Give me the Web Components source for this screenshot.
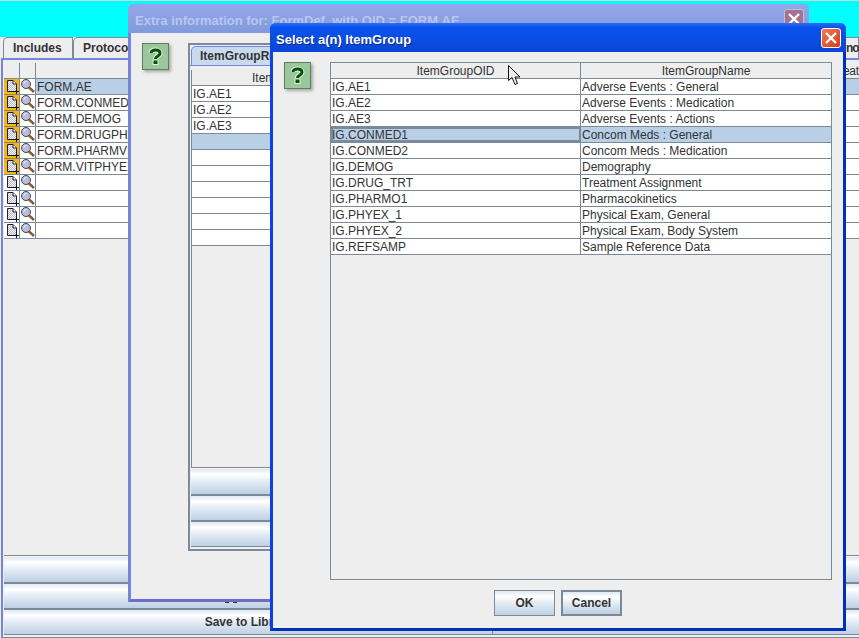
<!DOCTYPE html>
<html>
<head>
<meta charset="utf-8">
<style>
html, body { margin: 0; height: 100%; overflow: hidden; background: #00ffff; }
body { font: 12px "Liberation Sans", Arial, sans-serif; color: #333; }
desk-top { width: 859px; height: 638px; }
</style>
</head>
<body>
<desk-top>
  <main-frame></main-frame>
  <dialog-window id="extra" title="Extra information for: FormDef  with OID = FORM.AE" faded style="left:128px;top:4px;width:681px;height:598px">
    <extra-body></extra-body>
  </dialog-window>
  <dialog-window id="select" title="Select a(n) ItemGroup" style="left:270px;top:23px;width:576px;height:608px">
    <select-body></select-body>
  </dialog-window>
  <mouse-arrow></mouse-arrow>
</desk-top>

<script>
const GRAD = 'linear-gradient(#dfe8f2 0%, #ffffff 22%, #e4ecf5 50%, #bdd0e4 100%)';
const BOLD = 'bold 12px "Liberation Sans", Arial, sans-serif';

class DeskTop extends HTMLElement {
  constructor() {
    super();
    this.attachShadow({ mode: 'open' });
    this.shadowRoot.innerHTML = `
    <style>
      :host { display: block; position: relative; overflow: hidden; background: #00ffff; box-shadow: inset 0 1px 0 #c8d8d8; }
    </style>
    <slot></slot>`;
  }
}

class HelpIcon extends HTMLElement {
  constructor() {
    super();
    this.attachShadow({ mode: 'open' });
    this.shadowRoot.innerHTML = `
    <style>
      :host { display: block; width: 27px; height: 27px; box-sizing: border-box; background: #9cc79c; border: 1px solid #5c805c; box-shadow: 2px 2px 3px #a8a8a8; }
      svg { display: block; }
    </style>
    <svg width="25" height="25" viewBox="0 0 25 25">
      <path d="M8 9 C8 5 17 5 17 9.5 C17 12 12.5 12 12.5 15" fill="none" stroke="#d8f5d8" stroke-width="5"/>
      <rect x="9.5" y="15.5" width="6" height="5.5" fill="#d8f5d8"/>
      <path d="M8 9 C8 5 17 5 17 9.5 C17 12 12.5 12 12.5 15" fill="none" stroke="#0b4f0b" stroke-width="3"/>
      <rect x="10.5" y="16.5" width="4" height="3.5" fill="#0b4f0b"/>
    </svg>`;
  }
}

class DialogWindow extends HTMLElement {
  constructor() {
    super();
    this.attachShadow({ mode: 'open' });
    this.shadowRoot.innerHTML = `
    <style>
      :host { display: flex; flex-direction: column; position: absolute; box-sizing: border-box; border: 3px solid #0a40e8; border-top: 0; border-right-color: #0030b8; border-bottom-color: #0030b8; border-radius: 6px 6px 0 0; background: #eeeeee; }
      :host([faded]) { border-color: #7585dc; border-right-color: #6a78c8; border-bottom-color: #6a6ec8; }
      .bar { flex: none; height: 29px; margin: 0 -3px; display: flex; align-items: center; justify-content: space-between; padding: 0 5px 0 6px; border-radius: 6px 6px 0 0; background: linear-gradient(#2f6cf5 0%, #0a52ee 15%, #0a4de0 60%, #0a45d8 100%); font: bold 13px "Liberation Sans", Arial, sans-serif; color: #fff; text-shadow: 1px 1px 0 #06288c; white-space: pre; }
      :host([faded]) .bar { background: linear-gradient(#92a8e8 0%, #8299dc 100%); color: #b9c6ef; text-shadow: none; padding-left: 7px; }
      #t { padding-top: 3px; }
      .close { width: 20px; height: 20px; box-sizing: border-box; border: 1px solid #fff; border-radius: 3px; background: linear-gradient(135deg, #ef7a55, #d83c12); }
      :host([faded]) .close { background: #a6708e; border-color: #b9c0e8; }
      svg { display: block; }
      .body { flex: 1; min-height: 0; display: flex; flex-direction: column; }
    </style>
    <div class="bar"><span id="t"></span><div class="close"><svg width="18" height="18" viewBox="0 0 18 18"><path d="M4 4 L14 14 M14 4 L4 14" stroke="#fff" stroke-width="2.4"/></svg></div></div>
    <div class="body"><slot></slot></div>`;
    this.shadowRoot.getElementById('t').textContent = this.getAttribute('title');
    this.removeAttribute('title');
  }
}

class SwingTable extends HTMLElement {
  set config(c) {
    const cols = c.widths.join(' ');
    let html = '<div class="row head" style="grid-template-columns:' + cols + '">';
    c.head.forEach(h => { html += '<div class="cell">' + h + '</div>'; });
    html += '</div>';
    c.rows.forEach((r, i) => {
      let cl = 'row';
      if (i === c.selected) cl += c.focus ? ' sel focus' : ' sel';
      html += '<div class="' + cl + '" style="grid-template-columns:' + cols + '">';
      r.forEach(v => { html += '<div class="cell">' + v + '</div>'; });
      html += '</div>';
    });
    this.shadowRoot.getElementById('g').innerHTML = html;
  }
  constructor() {
    super();
    this.attachShadow({ mode: 'open' });
    this.shadowRoot.innerHTML = `
    <style>
      :host { display: block; font: 12px "Liberation Sans", Arial, sans-serif; color: #333; overflow: hidden; }
      .row { display: grid; height: 16px; box-sizing: border-box; background: #fff; border-bottom: 1px solid #7a8a99; }
      .head { background: #eeeeee; }
      .head .cell { text-align: center; padding-left: 0; }
      .cell { box-sizing: border-box; padding: 1px 0 0 1px; border-right: 1px solid #7a8a99; line-height: 14px; white-space: nowrap; overflow: hidden; }
      .cell:last-child { border-right: 0; }
      .sel { background: #b8cfe5; }
      .focus .cell:first-child { outline: 2px solid #7a8a99; outline-offset: -2px; }
    </style>
    <div id="g"></div>`;
  }
}

class NoteIcon extends HTMLElement {
  constructor() {
    super();
    this.attachShadow({ mode: 'open' });
    this.shadowRoot.innerHTML = `
    <style>
      :host { display: block; width: 15px; height: 15px; }
      :host([on]) { background: #f5b80a; }
      svg { display: block; }
    </style>
    <svg width="15" height="15" viewBox="0 0 15 15">
      <defs><pattern id="d" width="2" height="2" patternUnits="userSpaceOnUse"><rect width="2" height="2" fill="#fff"/><rect width="1" height="1" fill="#b4b4d8"/><rect x="1" y="1" width="1" height="1" fill="#b4b4d8"/></pattern></defs>
      <path d="M3.5 1.5 H9 L12.5 5 V12.5 H3.5 Z" fill="url(#d)" stroke="#222"/>
      <path d="M9 1.5 V5 H12.5" fill="#fff" stroke="#222"/>
      <path d="M12.5 10 V15 M10 12.5 H15" stroke="#111" stroke-width="1"/>
    </svg>`;
  }
}

class LensIcon extends HTMLElement {
  constructor() {
    super();
    this.attachShadow({ mode: 'open' });
    this.shadowRoot.innerHTML = `
    <style>
      :host { display: block; width: 15px; height: 15px; }
      svg { display: block; }
    </style>
    <svg width="15" height="15" viewBox="0 0 15 15">
      <path d="M8.5 8 L14 13" stroke="#8a5a2a" stroke-width="2.4"/>
      <circle cx="6" cy="5" r="4.5" fill="#b8bcd8" stroke="#444" stroke-width="1"/>
      <path d="M3.5 4.5 Q4.5 2.5 6.5 2.5" stroke="#fff" fill="none"/>
    </svg>`;
  }
}

class BigButton extends HTMLElement {
  constructor() {
    super();
    this.attachShadow({ mode: 'open' });
    this.shadowRoot.innerHTML = `
    <style>
      :host { display: flex; align-items: center; justify-content: center; box-sizing: border-box; height: 26px; background: ${GRAD}; border-bottom: 2px solid #7a8a99; font: ${BOLD}; color: #333; }
      :host(:first-child) { height: 27px; }
      :host(:last-child) { height: 24px; border-bottom: 0; }
    </style>
    <slot></slot>`;
  }
}

class MainFrame extends HTMLElement {
  constructor() {
    super();
    this.attachShadow({ mode: 'open' });
    const rows = ['FORM.AE', 'FORM.CONMED', 'FORM.DEMOG', 'FORM.DRUGPHARM', 'FORM.PHARMVIT', 'FORM.VITPHYEX', '', '', '', ''];
    let list = '<div class="line head"><i></i><i></i><i></i><i>eat</i></div>';
    rows.forEach((r, i) => {
      list += '<div class="line' + (i === 0 ? ' sel' : '') + '"><i><note-icon ' + (r ? 'on' : '') + '></note-icon></i><i><lens-icon></lens-icon></i><i>' + r + '</i><i></i></div>';
    });
    this.shadowRoot.innerHTML = `
    <style>
      :host { position: absolute; left: 0; top: 37px; right: 0; bottom: 0; box-sizing: border-box; display: flex; flex-direction: column; background: #eeeeee; overflow: hidden; }
      .tabs { flex: none; display: flex; height: 21px; padding-left: 3px; }
      .tab { box-sizing: border-box; height: 21px; width: 70px; flex: none; padding-left: 9px; font: ${BOLD}; line-height: 21px; border: 1px solid #7a8a99; border-bottom: 0; border-radius: 5px 0 0 0; color: #333; white-space: nowrap; }
      .main { flex: 1; min-height: 0; box-sizing: border-box; margin-left: 1px; border: solid #7585dc; border-width: 2px 0 0 2px; border-bottom: 1px solid #7a8a99; padding: 3px 0 2px 1px; display: flex; flex-direction: column; }
      .list { flex: 1; min-height: 0; }
      .line { display: grid; grid-template-columns: 16px 16px 807px 1fr; height: 16px; box-sizing: border-box; background: #fff; border-bottom: 1px solid #7a8a99; }
      .line.head { background: #eee; }
      .line.sel { background: #b8cfe5; }
      .line.sel i:nth-child(1), .line.sel i:nth-child(2) { background: #fff; }
      i { font-style: normal; display: block; padding: 1px 0 0 1px; line-height: 14px; border-right: 1px solid #7a8a99; box-sizing: border-box; white-space: nowrap; overflow: hidden; }
      i:nth-child(1), i:nth-child(2) { padding: 0; }
      i:nth-child(4) { border-right: 0; padding-left: 0; letter-spacing: -0.3px; }
      .btns { flex: none; display: grid; grid-template-columns: 488px 1fr; gap: 1px; background: #7a8a99; border-top: 1px solid #888; border-bottom: 1px solid #7a8a99; }
      .col { display: flex; flex-direction: column; background: #f6f6f6; padding-top: 1px; }
      .marks { display: block; }
    </style>
    <div class="tabs">
      <div class="tab">Includes</div>
      <div class="tab" style="width:200px">Protocol</div>
      <div class="tab" style="margin-left:547px;width:39px;padding-left:25px;letter-spacing:-1px;border-radius:0">no</div>
    </div>
    <div class="main">
      <div class="list">${list}</div>
      <div class="btns">
        <div class="col">
          <big-button></big-button>
          <big-button><svg class="marks" width="46" height="24" viewBox="0 0 46 24"><rect x="0" y="18" width="4" height="1" fill="#333"/><rect x="8" y="18" width="4" height="1" fill="#333"/></svg></big-button>
          <big-button>Save to Library</big-button>
        </div>
        <div class="col">
          <big-button></big-button>
          <big-button></big-button>
          <big-button></big-button>
        </div>
      </div>
    </div>`;
  }
}

class ExtraBody extends HTMLElement {
  constructor() {
    super();
    this.attachShadow({ mode: 'open' });
    this.shadowRoot.innerHTML = `
    <style>
      :host { flex: 1; min-height: 0; display: flex; padding: 10px 0 48px 11px; box-sizing: border-box; height: 100%; gap: 19px; }
      help-icon { flex: none; }
      .pane { width: 240px; box-sizing: border-box; display: flex; flex-direction: column; border: 2px solid #7a8a99; border-right: 0; padding: 0 0 2px 0; background: #eee; }
      .tab { flex: none; width: 180px; margin: 1px 0 0 1px; height: 19px; box-sizing: border-box; font: ${BOLD}; line-height: 19px; padding-left: 8px; background: #c8dbee; border: 1px solid #7585dc; border-bottom: 0; border-radius: 5px 0 0 0; white-space: nowrap; overflow: hidden; }
      .in { flex: 1; min-height: 0; display: flex; flex-direction: column; border-top: 1px solid #7585dc; padding: 4px 0 0 1px; }
      swing-table { flex: 1; min-height: 0; border-left: 1px solid #7a8a99; }
      .btns { flex: none; border-top: 1px solid #888; border-bottom: 1px solid #7a8a99; padding-top: 1px; background: #f6f6f6; }
    </style>
    <help-icon></help-icon>
    <div class="pane">
      <div class="tab">ItemGroupRef</div>
      <div class="in">
        <swing-table id="t"></swing-table>
        <div class="btns">
          <big-button></big-button>
          <big-button></big-button>
          <big-button></big-button>
        </div>
      </div>
    </div>`;
    const blank = [''];
    this.shadowRoot.getElementById('t').config = {
      widths: ['198px'], head: ['ItemGroupOID'], selected: 3,
      rows: [['IG.AE1'], ['IG.AE2'], ['IG.AE3'], blank, blank, blank, blank, blank, blank, blank]
    };
  }
}

class SelectBody extends HTMLElement {
  constructor() {
    super();
    this.attachShadow({ mode: 'open' });
    this.shadowRoot.innerHTML = `
    <style>
      :host { flex: 1; display: flex; flex-direction: column; box-sizing: border-box; height: 100%; padding: 10px 11px 12px 11px; }
      .top { flex: 1; min-height: 0; display: flex; gap: 19px; }
      help-icon { flex: none; }
      .box { flex: 1; border: 1px solid #7a8a99; background: #eee; }
      .foot { flex: none; display: flex; justify-content: center; gap: 6px; padding-top: 10px; }
      .btn { width: 61px; height: 26px; box-sizing: border-box; border: 1px solid #7a8a99; background: ${GRAD}; font: ${BOLD}; line-height: 24px; text-align: center; color: #333; }
      .btn.def { border-width: 2px; line-height: 22px; }
    </style>
    <div class="top">
      <help-icon></help-icon>
      <div class="box"><swing-table id="t"></swing-table></div>
    </div>
    <div class="foot"><div class="btn">OK</div><div class="btn def">Cancel</div></div>`;
    this.shadowRoot.getElementById('t').config = {
      widths: ['250px', '1fr'], head: ['ItemGroupOID', 'ItemGroupName'], selected: 3, focus: true,
      rows: [
        ['IG.AE1', 'Adverse Events : General'],
        ['IG.AE2', 'Adverse Events : Medication'],
        ['IG.AE3', 'Adverse Events : Actions'],
        ['IG.CONMED1', 'Concom Meds : General'],
        ['IG.CONMED2', 'Concom Meds : Medication'],
        ['IG.DEMOG', 'Demography'],
        ['IG.DRUG_TRT', 'Treatment Assignment'],
        ['IG.PHARMO1', 'Pharmacokinetics'],
        ['IG.PHYEX_1', 'Physical Exam, General'],
        ['IG.PHYEX_2', 'Physical Exam, Body System'],
        ['IG.REFSAMP', 'Sample Reference Data']
      ]
    };
  }
}

class MouseArrow extends HTMLElement {
  constructor() {
    super();
    this.attachShadow({ mode: 'open' });
    this.shadowRoot.innerHTML = `
    <style>
      :host { position: absolute; left: 508px; top: 65px; width: 14px; height: 22px; }
      svg { display: block; }
    </style>
    <svg width="14" height="22" viewBox="0 0 14 22">
      <path d="M0.5 0.5 V15.5 L4 12.5 L7 19.5 L9.5 18.5 L7 12 H12 Z" fill="#eee" stroke="#111"/>
    </svg>`;
  }
}

customElements.define('desk-top', DeskTop);
customElements.define('help-icon', HelpIcon);
customElements.define('dialog-window', DialogWindow);
customElements.define('swing-table', SwingTable);
customElements.define('note-icon', NoteIcon);
customElements.define('lens-icon', LensIcon);
customElements.define('big-button', BigButton);
customElements.define('main-frame', MainFrame);
customElements.define('extra-body', ExtraBody);
customElements.define('select-body', SelectBody);
customElements.define('mouse-arrow', MouseArrow);
</script>
</body>
</html>
